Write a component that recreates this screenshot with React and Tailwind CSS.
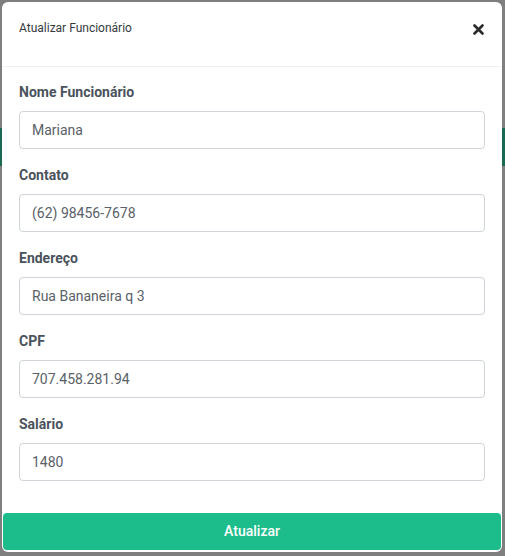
import React from "react";

const fields = [
  { label: "Nome Funcionário", value: "Mariana" },
  { label: "Contato", value: "(62) 98456-7678" },
  { label: "Endereço", value: "Rua Bananeira q 3" },
  { label: "CPF", value: "707.458.281.94" },
  { label: "Salário", value: "1480" },
];

export default function App() {
  return (
    <div
      className="relative w-[505px] h-[556px] overflow-hidden bg-[#7f7f7f]"
      style={{ fontFamily: "Roboto, 'Liberation Sans', sans-serif" }}
    >
      {/* background page content under overlay */}
      <div className="absolute left-0 top-[128px] w-[505px] h-[38px] bg-[#1a6a54]" />

      <div className="relative ml-[2px] mt-[2px] w-[500px] h-[550px] bg-white rounded-[6px] flex flex-col">
        <div className="flex items-start justify-between h-[65px] border-b border-[#eef0f4] pl-[17px] pr-[17px] pt-[17px]">
          <span className="text-[12px] leading-[18px] text-[#343a40]">Atualizar Funcionário</span>
          <svg width="11" height="11" viewBox="0 0 11 11" className="mt-[5px] mr-[1px]">
            <path d="M1.5 1.5 L9.5 9.5 M9.5 1.5 L1.5 9.5" stroke="#2b2b2b" strokeWidth="2.6" strokeLinecap="round" />
          </svg>
        </div>

        <div className="flex flex-col px-[17px] pt-[15px]">
          {fields.map((f) => (
            <div key={f.label} className="mb-[16px] flex flex-col">
              <label className="text-[14px] leading-[21px] font-bold text-[#4a525c] mb-[8px]">{f.label}</label>
              <div className="h-[38px] border border-[#ced4da] rounded-[4px] flex items-center px-[12px] text-[14px] text-[#5a6168]">
                {f.value}
              </div>
            </div>
          ))}
        </div>

        <div className="mt-auto px-[1px] pb-[2px]">
          <button className="w-full h-[37px] rounded-[4px] bg-[#1dbc8b] text-white text-[14px] font-medium flex items-center justify-center">
            Atualizar
          </button>
        </div>
      </div>
    </div>
  );
}
